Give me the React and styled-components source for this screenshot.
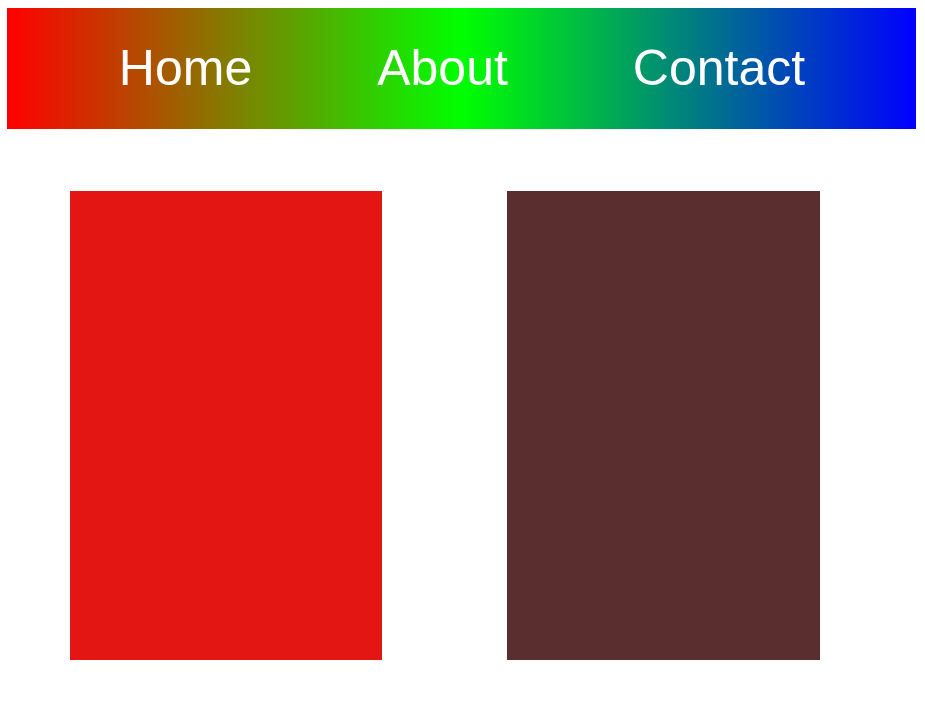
import React from "react";
import styled, { createGlobalStyle } from "styled-components";

const Global = createGlobalStyle`
  html, body { background: #fff; }
  body { margin: 8px 9px 8px 7px; font-family: "Liberation Sans", Arial, sans-serif; }
`;

const Nav = styled.nav`
  box-sizing: border-box;
  height: 121px;
  background: linear-gradient(to right, #ff0000, #00ff00, #0000ff);
  display: flex;
  align-items: center;
  justify-content: center;
`;

const NavList = styled.ul`
  list-style: none;
  margin: 0 0 0 1px;
  padding: 0;
  display: flex;
  gap: 125px;
`;

const NavItem = styled.li`
  color: #fff;
  font-size: 50px;
  line-height: 57px;
`;

const Main = styled.main`
  display: flex;
  gap: 125px;
  padding: 62px 0 0 63px;
`;

const Panel = styled.div`
  width: ${(p) => p.$w}px;
  height: 469px;
  background: ${(p) => p.$color};
`;

export default function App() {
  return (
    <>
      <Global />
      <Nav>
        <NavList>
          <NavItem>Home</NavItem>
          <NavItem>About</NavItem>
          <NavItem>Contact</NavItem>
        </NavList>
      </Nav>
      <Main>
        <Panel $w={312} $color="#e31614" />
        <Panel $w={313} $color="#5a2d2e" />
      </Main>
    </>
  );
}
